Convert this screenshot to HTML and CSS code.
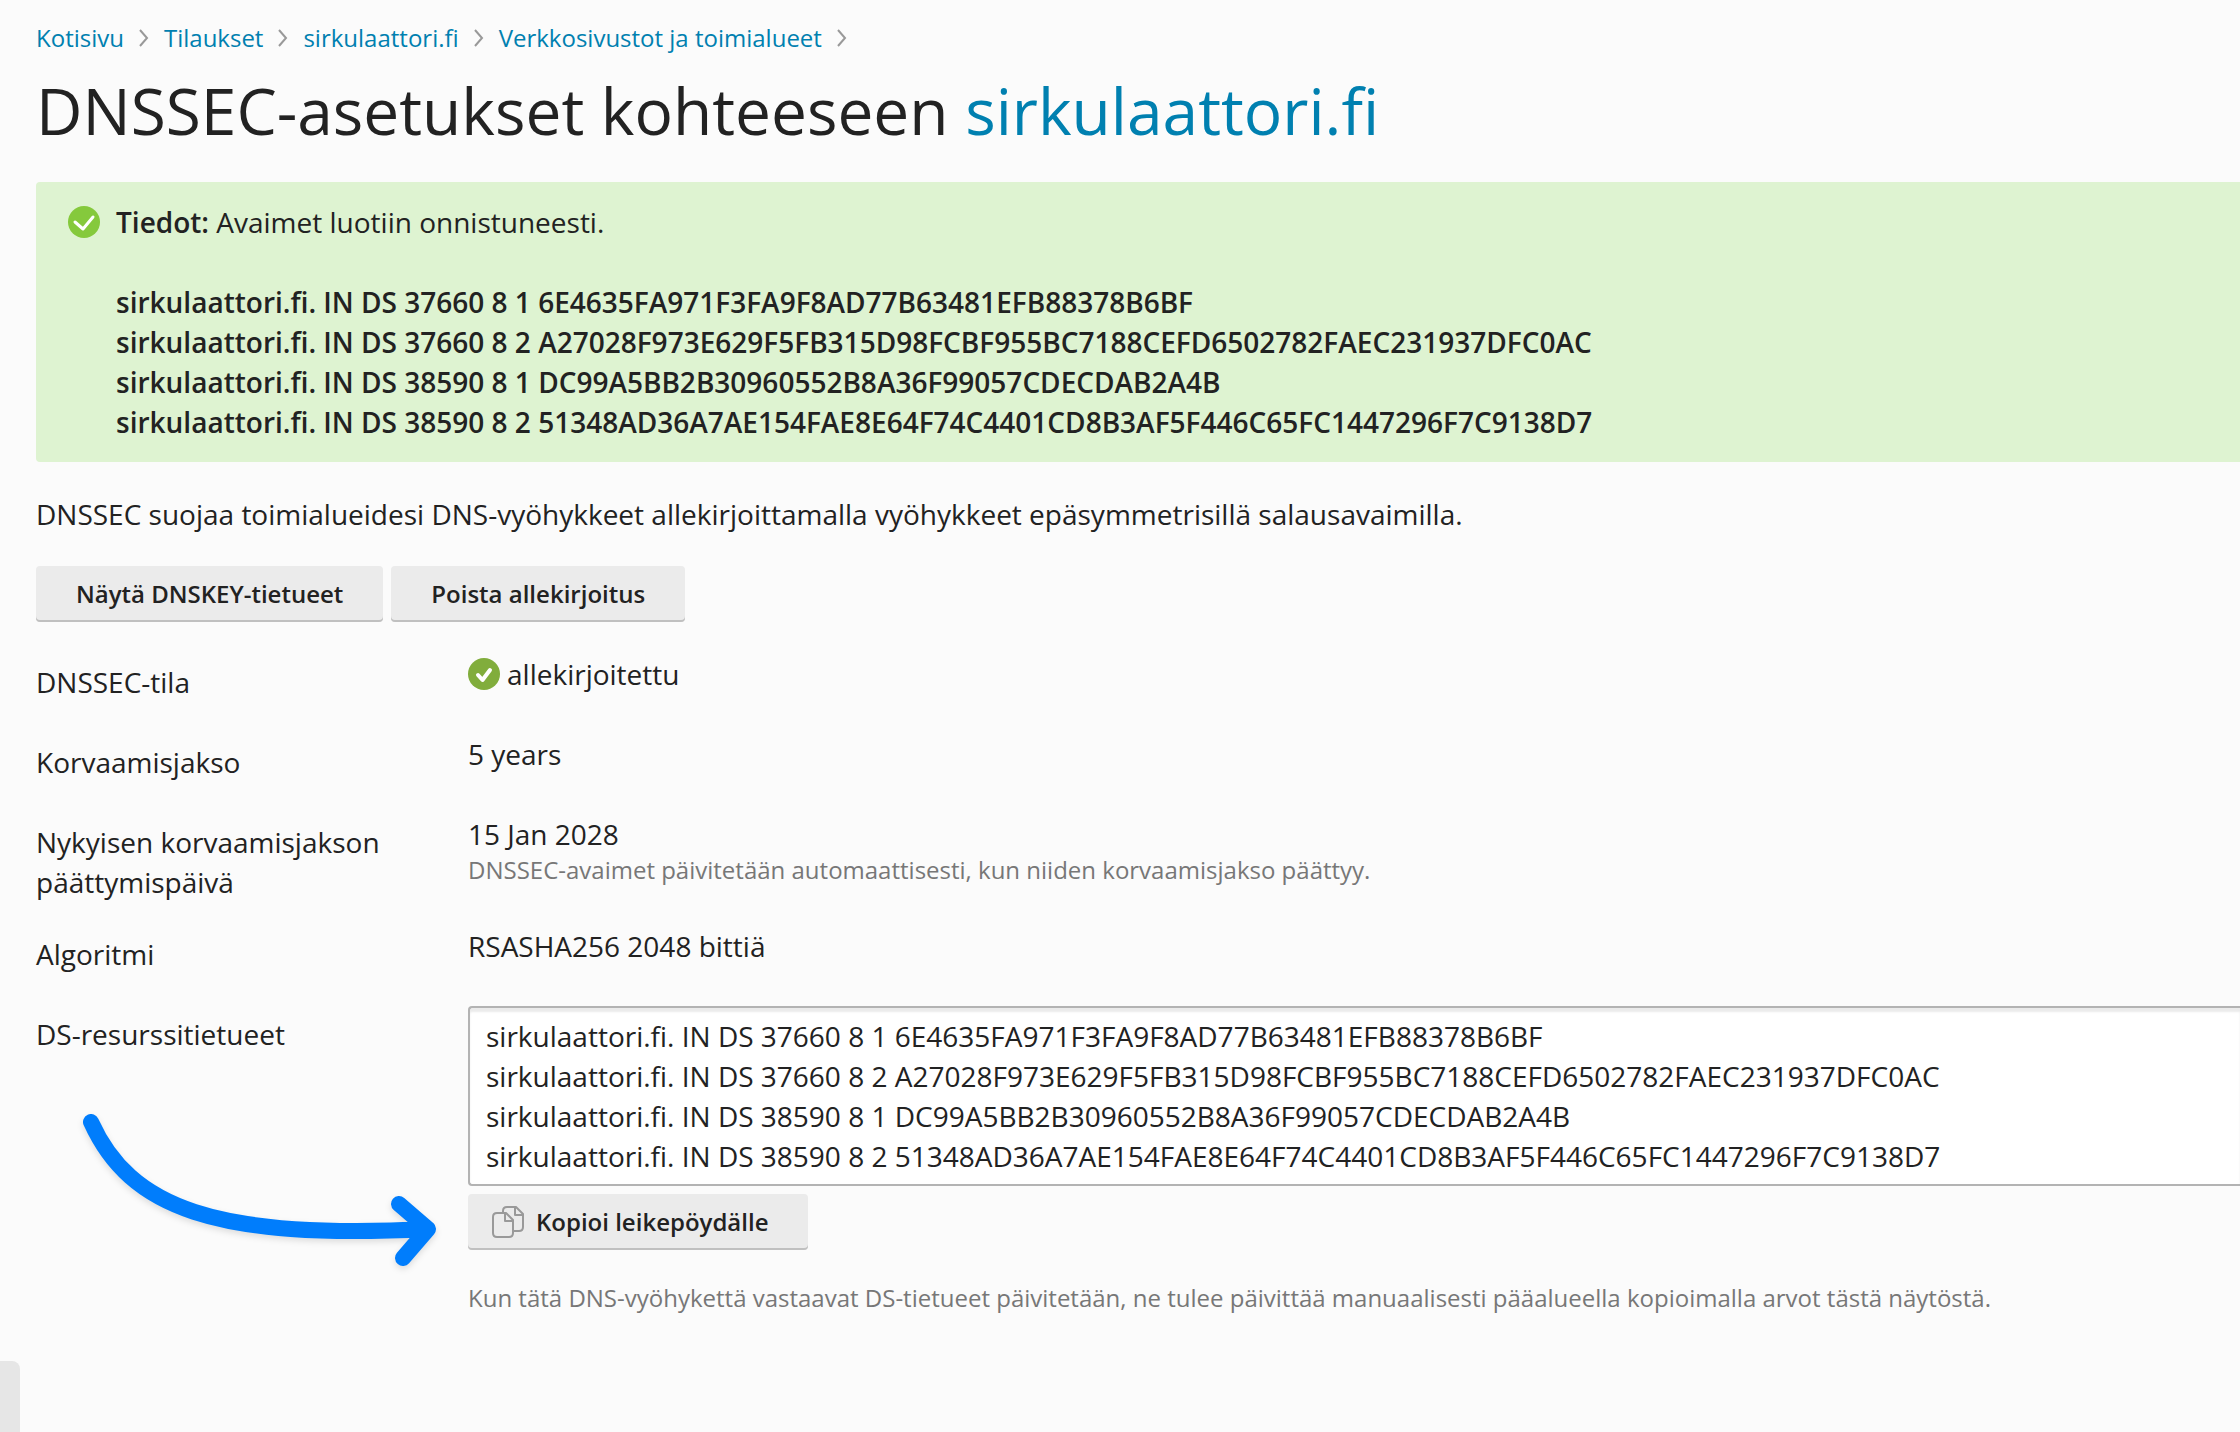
FILE: index.html
```html
<!DOCTYPE html>
<html lang="fi">
<head>
<meta charset="utf-8">
<title>DNSSEC-asetukset kohteeseen sirkulaattori.fi</title>
<link rel="stylesheet" href="styles.css">
</head>
<body>
<nav class="breadcrumbs" aria-label="Murupolku">
  <a href="#">Kotisivu</a>
  <svg class="chevron" viewBox="0 0 10 18" aria-hidden="true"><path d="M1 1l7 8-7 8"/></svg>
  <a href="#">Tilaukset</a>
  <svg class="chevron" viewBox="0 0 10 18" aria-hidden="true"><path d="M1 1l7 8-7 8"/></svg>
  <a href="#">sirkulaattori.fi</a>
  <svg class="chevron" viewBox="0 0 10 18" aria-hidden="true"><path d="M1 1l7 8-7 8"/></svg>
  <a href="#">Verkkosivustot ja toimialueet</a>
  <svg class="chevron" viewBox="0 0 10 18" aria-hidden="true"><path d="M1 1l7 8-7 8"/></svg>
</nav>
<main>
  <h1 class="title">DNSSEC-asetukset kohteeseen <a href="#">sirkulaattori.fi</a></h1>
  <div class="alert" role="status">
    <svg class="icon alert-icon" viewBox="0 0 32 32" aria-hidden="true"><circle cx="16" cy="16" r="16" fill="#85c93c"/><path d="M7 16l8 7L25 11" fill="none" stroke="#fff" stroke-width="3" stroke-linecap="round" stroke-linejoin="round"/></svg>
    <div>
      <p class="alert-message"><b>Tiedot:</b> Avaimet luotiin onnistuneesti.</p>
      <ul class="alert-records">
        <li>sirkulaattori.fi. IN DS 37660 8 1 6E4635FA971F3FA9F8AD77B63481EFB88378B6BF</li>
        <li>sirkulaattori.fi. IN DS 37660 8 2 A27028F973E629F5FB315D98FCBF955BC7188CEFD6502782FAEC231937DFC0AC</li>
        <li>sirkulaattori.fi. IN DS 38590 8 1 DC99A5BB2B30960552B8A36F99057CDECDAB2A4B</li>
        <li>sirkulaattori.fi. IN DS 38590 8 2 51348AD36A7AE154FAE8E64F74C4401CD8B3AF5F446C65FC1447296F7C9138D7</li>
      </ul>
    </div>
  </div>
  <p class="intro">DNSSEC suojaa toimialueidesi DNS-vyöhykkeet allekirjoittamalla vyöhykkeet epäsymmetrisillä salausavaimilla.</p>
  <div class="toolbar">
    <button class="button" type="button">Näytä DNSKEY-tietueet</button>
    <button class="button" type="button">Poista allekirjoitus</button>
  </div>
  <div class="fields">
    <div class="field">
      <div class="field-label">DNSSEC-tila</div>
      <div class="field-value status">
        <svg class="icon" viewBox="0 0 32 32" aria-hidden="true"><circle cx="16" cy="16" r="16" fill="#81ad3c"/><path d="M10 17l4.500 5L22 12" fill="none" stroke="#fff" stroke-width="4" stroke-linecap="round" stroke-linejoin="round"/></svg>
        <span>allekirjoitettu</span>
      </div>
    </div>
    <div class="field">
      <div class="field-label">Korvaamisjakso</div>
      <div class="field-value">5 years</div>
    </div>
    <div class="field">
      <div class="field-label">Nykyisen korvaamisjakson päättymispäivä</div>
      <div class="field-value">15 Jan 2028
        <p class="hint">DNSSEC-avaimet päivitetään automaattisesti, kun niiden korvaamisjakso päättyy.</p>
      </div>
    </div>
    <div class="field">
      <div class="field-label">Algoritmi</div>
      <div class="field-value">RSASHA256 2048 bittiä</div>
    </div>
    <div class="field">
      <label class="field-label" for="ds-records">DS-resurssitietueet</label>
      <div class="field-value">
        <textarea class="records" id="ds-records" rows="4" readonly spellcheck="false">sirkulaattori.fi. IN DS 37660 8 1 6E4635FA971F3FA9F8AD77B63481EFB88378B6BF
sirkulaattori.fi. IN DS 37660 8 2 A27028F973E629F5FB315D98FCBF955BC7188CEFD6502782FAEC231937DFC0AC
sirkulaattori.fi. IN DS 38590 8 1 DC99A5BB2B30960552B8A36F99057CDECDAB2A4B
sirkulaattori.fi. IN DS 38590 8 2 51348AD36A7AE154FAE8E64F74C4401CD8B3AF5F446C65FC1447296F7C9138D7</textarea>
        <button class="button button-copy" type="button">
          <svg class="icon" viewBox="0 0 32 32" fill="none" stroke="#999" stroke-width="2" stroke-linejoin="round" aria-hidden="true"><path d="M14 7H5Q1 7 1 11V27Q1 31 5 31H17Q21 31 21 27V14L14 7H13V15H21"/><path d="M11 7V5Q11 1 15 1H24L31 8V21Q31 25 27 25H21M23 1V9H31"/></svg>
          <span>Kopioi leikepöydälle</span>
        </button>
        <p class="hint hint-copy">Kun tätä DNS-vyöhykettä vastaavat DS-tietueet päivitetään, ne tulee päivittää manuaalisesti pääalueella kopioimalla arvot tästä näytöstä.</p>
      </div>
      <svg class="arrow" viewBox="0 0 400 200" aria-hidden="true"><path d="M31 32C70 118 155 150 368 139M339 114L368 139L343 168"/></svg>
    </div>
  </div>
</main>
<div class="side-tab"></div>
</body>
</html>
```
FILE: styles.css
```css
* {
  box-sizing: border-box;
}

body {
  margin: 0;
  padding: 22px 0 0 36px;
  overflow-x: hidden;
  background: #fbfbfb;
  color: #222;
  font: 28px/40px "Open Sans", "Noto Sans", sans-serif;
}

a {
  color: #0080b0;
  text-decoration: none;
}

p,
ul {
  margin: 0;
  padding: 0;
}

b {
  font-weight: 600;
}

.icon {
  display: block;
  flex: none;
  width: 32px;
  height: 32px;
}

.breadcrumbs {
  display: flex;
  align-items: center;
  gap: 15px;
  font-size: 24px;
  line-height: 32px;
}

.chevron {
  width: 10px;
  height: 18px;
  fill: none;
  stroke: #999;
  stroke-width: 2;
}

.title {
  margin: 16px 0 30px;
  font-size: 64px;
  font-weight: 400;
  line-height: 82px;
}

.alert {
  display: flex;
  gap: 16px;
  padding: 20px 32px;
  border-radius: 4px 0 0 4px;
  background: #def3d1;
}

.alert-icon {
  margin-top: 4px;
}

.alert-records {
  margin-top: 40px;
  list-style: none;
  font-weight: 600;
}

.intro {
  margin: 32px 0;
}

.toolbar {
  display: flex;
  gap: 8px;
}

.button {
  height: 56px;
  padding: 0 40px;
  border: 0;
  border-radius: 4px;
  background: #ebebeb;
  box-shadow: inset 0 -2px #c0c0c0;
  color: #222;
  font: inherit;
  font-size: 24px;
  font-weight: 600;
}

.fields {
  display: grid;
  gap: 24px;
  margin-top: 32px;
}

.field {
  position: relative;
  display: grid;
  grid-template-columns: 392px 1fr;
  column-gap: 40px;
  align-items: start;
  min-height: 56px;
}

.field-label {
  padding-top: 8px;
}

.status {
  display: flex;
  align-items: center;
  gap: 7px;
}

.hint {
  color: #777;
  font-size: 24px;
  line-height: 32px;
}

.records {
  display: block;
  width: 100%;
  padding: 8px 16px;
  border: 2px solid #b3b3b3;
  border-right: 0;
  border-radius: 4px 0 0 4px;
  background: #fff;
  box-shadow: inset 0 4px 2px #ebebeb;
  color: inherit;
  font: inherit;
  resize: none;
  overflow: hidden;
}

.button-copy {
  display: flex;
  align-items: center;
  gap: 12px;
  margin-top: 8px;
  padding-left: 24px;
}

.hint-copy {
  margin-top: 32px;
}

.arrow {
  position: absolute;
  left: 24px;
  top: 84px;
  width: 400px;
  height: 200px;
  fill: none;
  stroke: #007dfc;
  stroke-width: 16;
  stroke-linecap: round;
  stroke-linejoin: round;
  filter: drop-shadow(0 3px 3px rgba(0, 0, 0, 0.12));
  pointer-events: none;
}

.side-tab {
  position: fixed;
  left: 0;
  bottom: 0;
  width: 20px;
  height: 71px;
  border-radius: 0 8px 0 0;
  background: #e6e6e6;
}
```
